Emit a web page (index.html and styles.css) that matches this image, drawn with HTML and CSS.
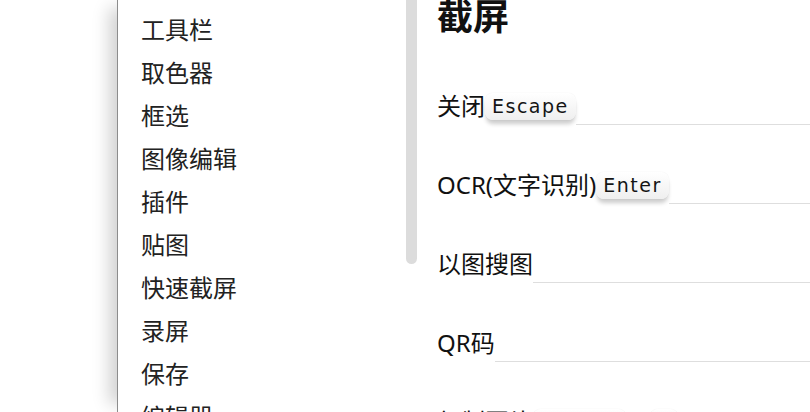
FILE: index.html
```html
<!DOCTYPE html>
<html lang="zh-CN">
<head>
<meta charset="utf-8">
<title>设置 - 截屏</title>
<link rel="stylesheet" href="styles.css">
</head>
<body>
<div class="app">
  <div class="gutter"></div>
  <aside class="sidebar">
    <ul class="nav">
      <li class="nav-item">全局设置</li>
      <li class="nav-item">工具栏</li>
      <li class="nav-item">取色器</li>
      <li class="nav-item">框选</li>
      <li class="nav-item">图像编辑</li>
      <li class="nav-item">插件</li>
      <li class="nav-item">贴图</li>
      <li class="nav-item">快速截屏</li>
      <li class="nav-item">录屏</li>
      <li class="nav-item">保存</li>
      <li class="nav-item">编辑器</li>
    </ul>
    <div class="thumb"></div>
  </aside>
  <main class="content">
    <h1 class="title">截屏</h1>
    <div class="row">
      <span class="label">关闭</span><kbd class="key">Escape</kbd><span class="rule"></span>
    </div>
    <div class="row">
      <span class="label">OCR(文字识别)</span><kbd class="key">Enter</kbd><span class="rule"></span>
    </div>
    <div class="row">
      <span class="label">以图搜图</span><span class="rule"></span>
    </div>
    <div class="row">
      <span class="label">QR码</span><span class="rule"></span>
    </div>
    <div class="row">
      <span class="label">复制图片</span><kbd class="key">Control</kbd><span class="plus">+</span><kbd class="key">C</kbd><span class="rule"></span>
    </div>
  </main>
</div>
</body>
</html>
```

FILE: styles.css
```css
html, body {
  margin: 0;
  padding: 0;
  background: #ffffff;
  width: 810px;
  height: 412px;
  overflow: hidden;
}

.app {
  display: flex;
  height: 412px;
  font-family: "Noto Sans", "Noto Sans CJK SC", sans-serif;
  color: #111111;
}

.gutter {
  width: 117px;
  flex: none;
  background: #ffffff;
}

.sidebar {
  width: 299px;
  flex: none;
  display: flex;
  align-items: flex-start;
  border-left: 1px solid #8c8c8c;
  background: #ffffff;
  box-shadow: -16px 0 16px -8px rgba(0, 0, 0, 0.18);
  overflow: hidden;
}

.nav {
  list-style: none;
  margin: -36px 0 0;
  padding: 0 0 0 23px;
  flex: 1;
}

.nav-item {
  height: 43px;
  line-height: 43px;
  font-size: 24px;
  color: #222222;
  font-family: "Noto Sans CJK SC", sans-serif;
  white-space: nowrap;
}

.thumb {
  width: 11px;
  height: 264px;
  flex: none;
  background: #dcdcdc;
  border-radius: 0 0 6px 6px;
}

.content {
  flex: 1;
  padding-left: 20px;
  overflow: hidden;
}

.title {
  margin: -4px 0 55px;
  font-size: 36px;
  line-height: 36px;
  font-weight: 700;
  font-family: "Noto Sans CJK SC", sans-serif;
  color: #111111;
}

.row {
  display: flex;
  align-items: center;
  height: 38px;
  margin-bottom: 41px;
  white-space: nowrap;
}

.label {
  font-size: 24px;
  line-height: 38px;
  color: #111111;
}

.key {
  display: inline-flex;
  align-items: center;
  height: 27px;
  padding: 0 7px;
  font-family: "DejaVu Sans", sans-serif;
  font-size: 19px;
  letter-spacing: 1.5px;
  color: #151515;
  background: linear-gradient(#ffffff, #efefef);
  border-radius: 8px;
  box-shadow: 0 5px 4px -1px rgba(0, 0, 0, 0.2), 0 0 1px rgba(0, 0, 0, 0.12);
}

.plus {
  font-size: 20px;
  margin: 0 6px;
  color: #444444;
}

.rule {
  flex: 1;
  align-self: flex-end;
  border-bottom: 1px solid #dedede;
}
```
